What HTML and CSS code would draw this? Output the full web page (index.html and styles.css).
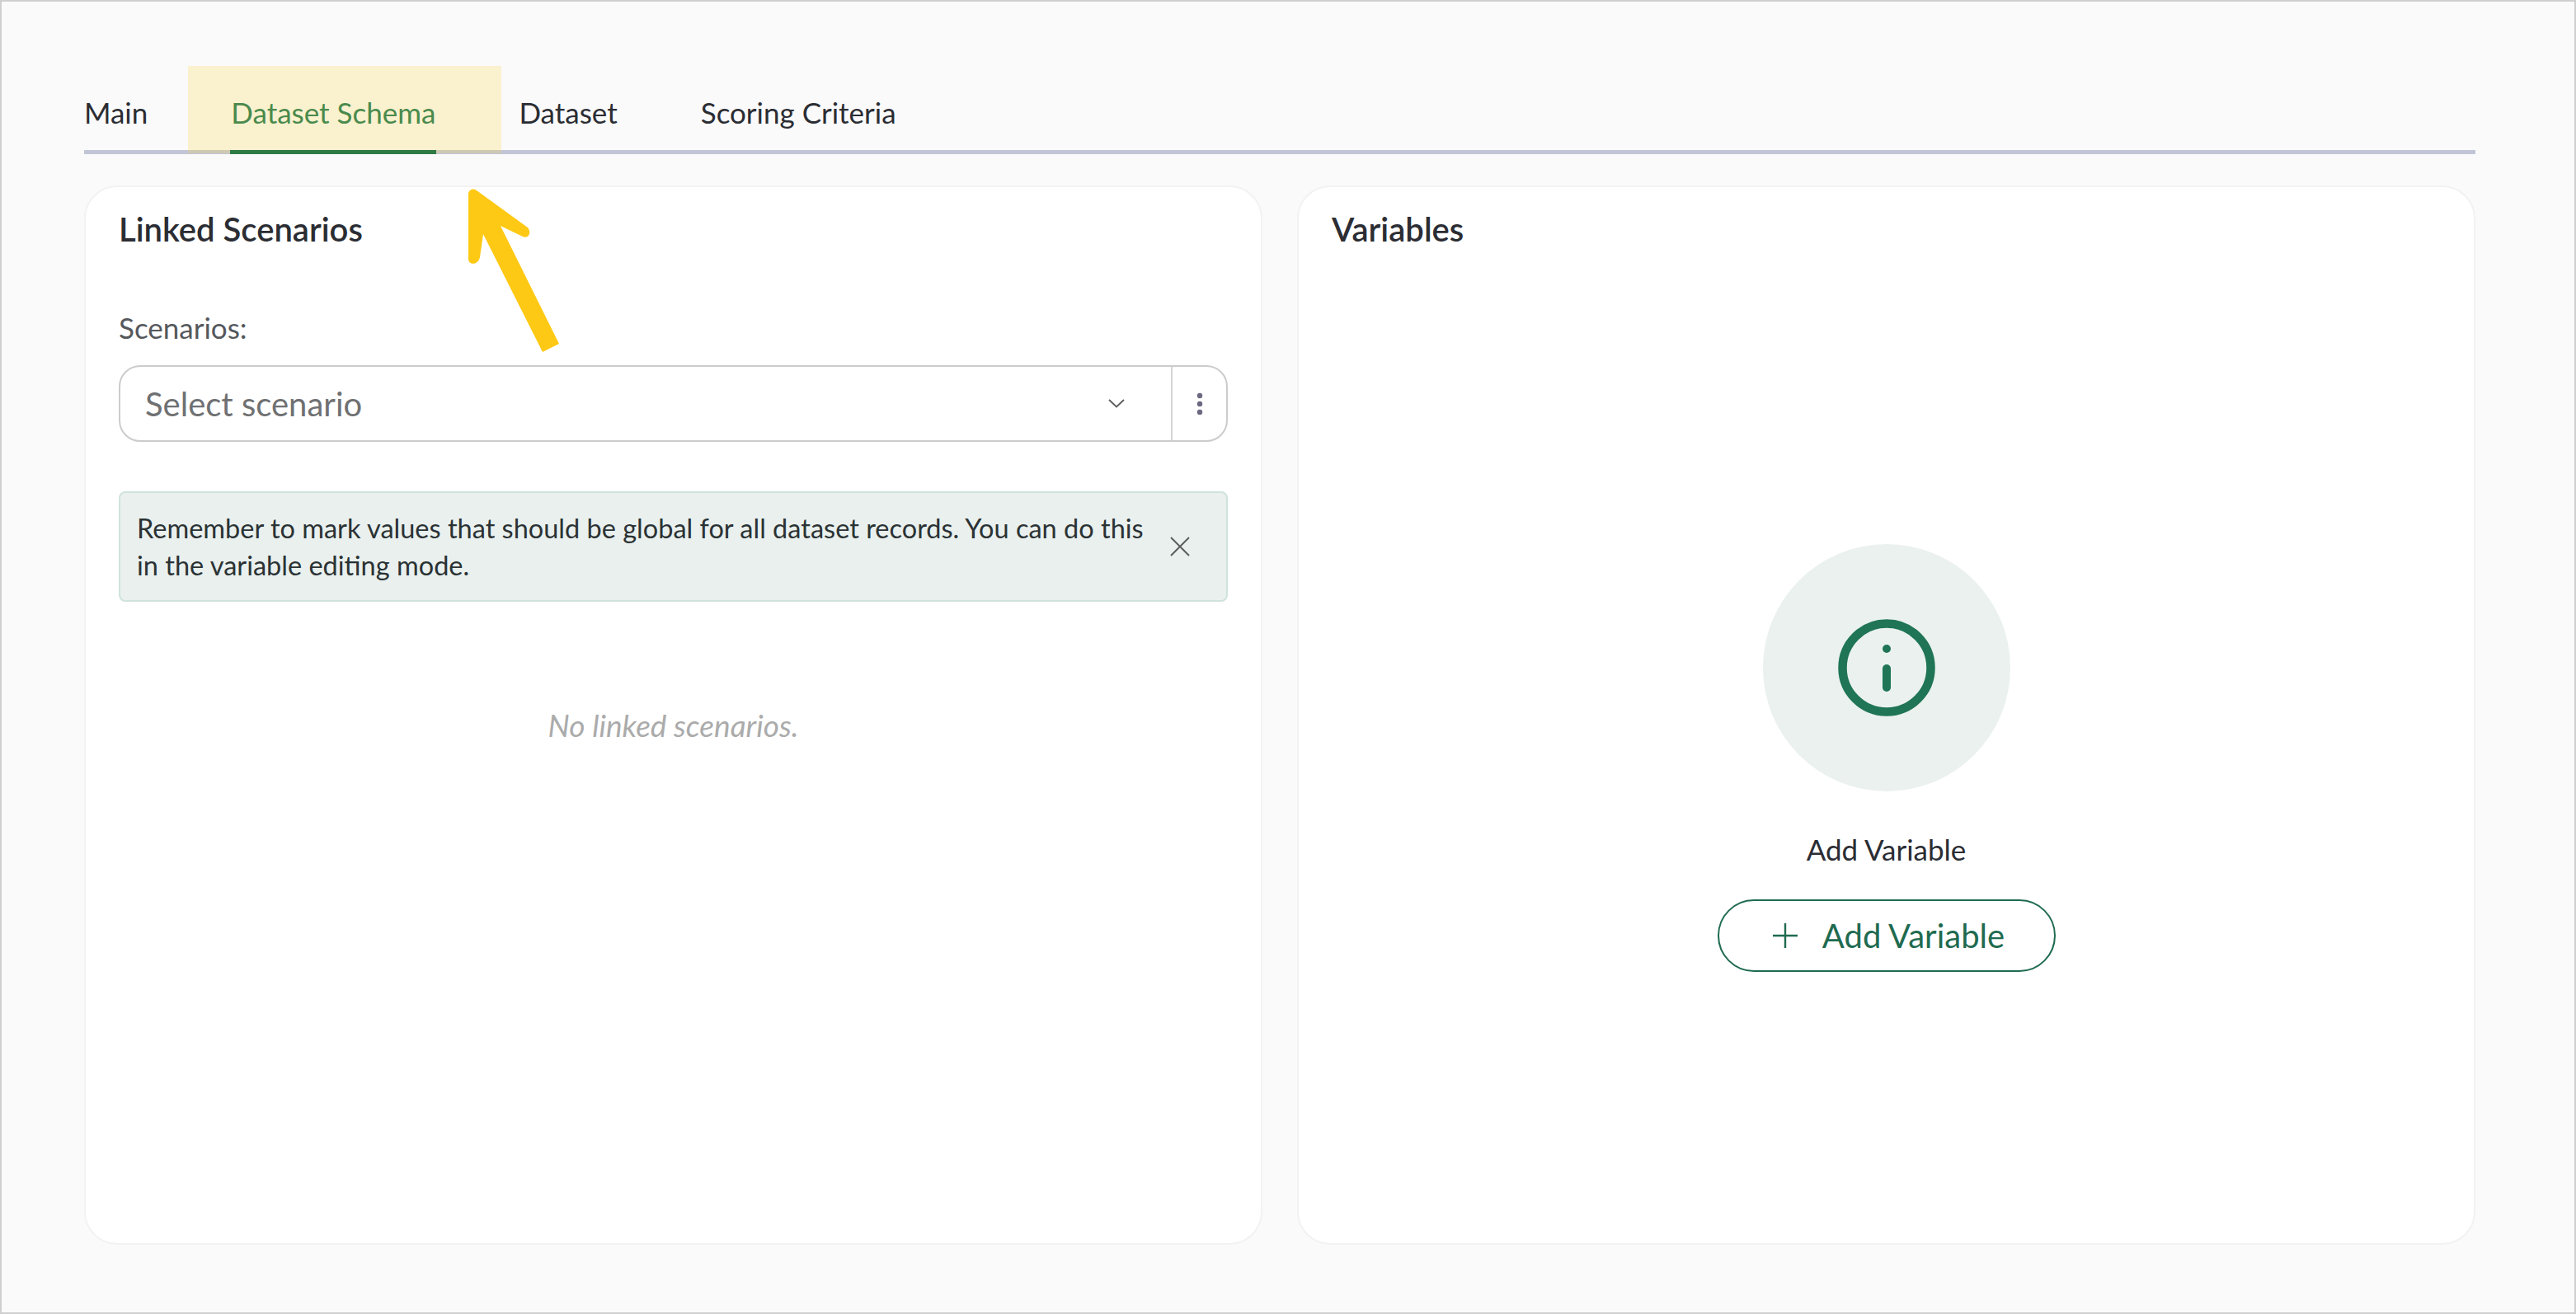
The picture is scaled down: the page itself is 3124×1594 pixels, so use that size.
FILE: index.html
```html
<!DOCTYPE html>
<html lang="en">
<head>
<meta charset="utf-8">
<title>Dataset Schema</title>
<link rel="stylesheet" href="styles.css">
</head>
<body>
<div class="frame">
  <nav class="tabs">
    <a class="tab">Main</a>
    <a class="tab tab-active">Dataset Schema</a>
    <a class="tab">Dataset</a>
    <a class="tab">Scoring Criteria</a>
  </nav>
  <main class="cards">
    <section class="card">
      <h2 class="card-title">Linked Scenarios</h2>
      <label class="field-label">Scenarios:</label>
      <div class="select">
        <span class="select-value">Select scenario</span>
        <svg class="chevron" width="20" height="11" viewBox="0 0 20 11"><path d="M1 1l9 8.5L19 1" fill="none" stroke="#5c5c5c" stroke-width="1.8"/></svg>
        <span class="select-more">
          <svg width="8" height="28" viewBox="0 0 8 28"><circle cx="4" cy="4" r="3.2" fill="#6b6880"/><circle cx="4" cy="14" r="3.2" fill="#6b6880"/><circle cx="4" cy="24" r="3.2" fill="#6b6880"/></svg>
        </span>
      </div>
      <div class="alert">
        <p class="alert-text">Remember to mark values that should be global for all dataset records. You can do this in the variable editing mode.</p>
        <svg class="alert-close" width="24" height="24" viewBox="0 0 24 24"><path d="M1 1l22 22M23 1L1 23" fill="none" stroke="#5a5f5d" stroke-width="2"/></svg>
      </div>
      <p class="empty-note">No linked scenarios.</p>
    </section>
    <section class="card">
      <h2 class="card-title">Variables</h2>
      <div class="empty-state">
        <div class="info-disc">
          <svg width="120" height="120" viewBox="0 0 120 120"><circle cx="60" cy="60" r="53.5" fill="none" stroke="#1f7556" stroke-width="10.5"/><circle cx="60" cy="37" r="5" fill="#1f7556"/><path d="M60 61v23" stroke="#1f7556" stroke-width="10" stroke-linecap="round"/></svg>
        </div>
        <p class="empty-label">Add Variable</p>
        <button class="add-btn">
          <svg width="30" height="30" viewBox="0 0 30 30"><path d="M15 0v30M0 15h30" stroke="#1f6b50" stroke-width="2.4"/></svg>
          <span>Add Variable</span>
        </button>
      </div>
    </section>
  </main>
  <div class="highlight"></div>
  <svg class="arrow" width="120" height="204" viewBox="0 0 120 204"><path d="M9 10C9 4 15 2 19 5L81 50C86 56 82 64 75 61L48 48 119 191 99 201 27 58 23 86C21 96 9 96 9 88Z" fill="#fec914"/></svg>
</div>
</body>
</html>
```
FILE: styles.css
```css
* { box-sizing: border-box; }
html, body { margin: 0; padding: 0; }
body { width: 3124px; height: 1594px; font-family: "Lato", "Liberation Sans", sans-serif; color: #2b2d33; }
.frame { position: relative; width: 3124px; height: 1594px; border: 2px solid #cfcfcf; background: #fafafa; padding: 78px 120px 82px 100px; display: flex; flex-direction: column; }
.tabs { display: flex; gap: 101px; height: 107px; border-bottom: 5px solid #c1c5d6; align-items: flex-start; padding-top: 35px; }
.tab { position: relative; height: 67px; font-size: 35px; line-height: 42px; color: #2b2d33; }
.tab-active { color: #4a8a4c; z-index: 2; }
.tab-active::after { content: ""; position: absolute; left: -1px; right: -1px; bottom: -5px; height: 5px; background: #2f7a45; }
.cards { flex: 1; display: grid; grid-template-columns: 1fr 1fr; gap: 42px; margin-top: 38px; min-height: 0; }
.card { background: #fff; border: 2px solid #f2f2f2; border-radius: 40px; padding: 26px 40px 0; display: flex; flex-direction: column; }
.card-title { margin: 0; font-size: 40px; line-height: 50px; font-weight: 600; color: #2b2d33; }
.field-label { margin-top: 74px; font-size: 35px; line-height: 40px; color: #55585c; }
.select { margin-top: 26px; height: 93px; border: 2px solid #cccccc; border-radius: 26px; display: flex; align-items: center; padding-left: 30px; }
.select-value { flex: 1; font-size: 40px; color: #6f7072; }
.chevron { margin-right: 56px; }
.select-more { width: 67px; height: 100%; border-left: 2px solid #d4d4d4; display: flex; align-items: center; justify-content: center; }
.alert { margin-top: 60px; height: 134px; background: #e9f0ee; border: 2px solid #cfe3dc; border-radius: 8px; display: flex; align-items: center; padding: 0 44px 0 20px; }
.alert-text { flex: 1; margin: 0; font-size: 32.5px; line-height: 45px; color: #2b3234; }
.alert-close { flex: none; margin-left: 16px; }
.empty-note { margin: 127px 0 0; text-align: center; font-size: 37px; font-style: italic; color: #ababab; }
.empty-state { flex: 1; display: flex; flex-direction: column; align-items: center; padding-top: 357px; }
.info-disc { width: 300px; height: 300px; border-radius: 50%; background: #eaf1ee; display: flex; align-items: center; justify-content: center; }
.empty-label { margin: 50px 0 0; font-size: 35px; line-height: 40px; color: #2b2d33; }
.add-btn { margin-top: 41px; width: 410px; height: 88px; border: 2px solid #1f6b50; border-radius: 44px; background: #fff; color: #1f6b50; font: inherit; font-size: 40px; display: flex; align-items: center; justify-content: center; gap: 30px; padding: 0 0 0 6px; }
.highlight { position: absolute; left: 226px; top: 78px; width: 380px; height: 106px; background: rgba(250, 214, 74, 0.25); z-index: 1; }
.arrow { position: absolute; left: 557px; top: 224px; z-index: 3; }
```
